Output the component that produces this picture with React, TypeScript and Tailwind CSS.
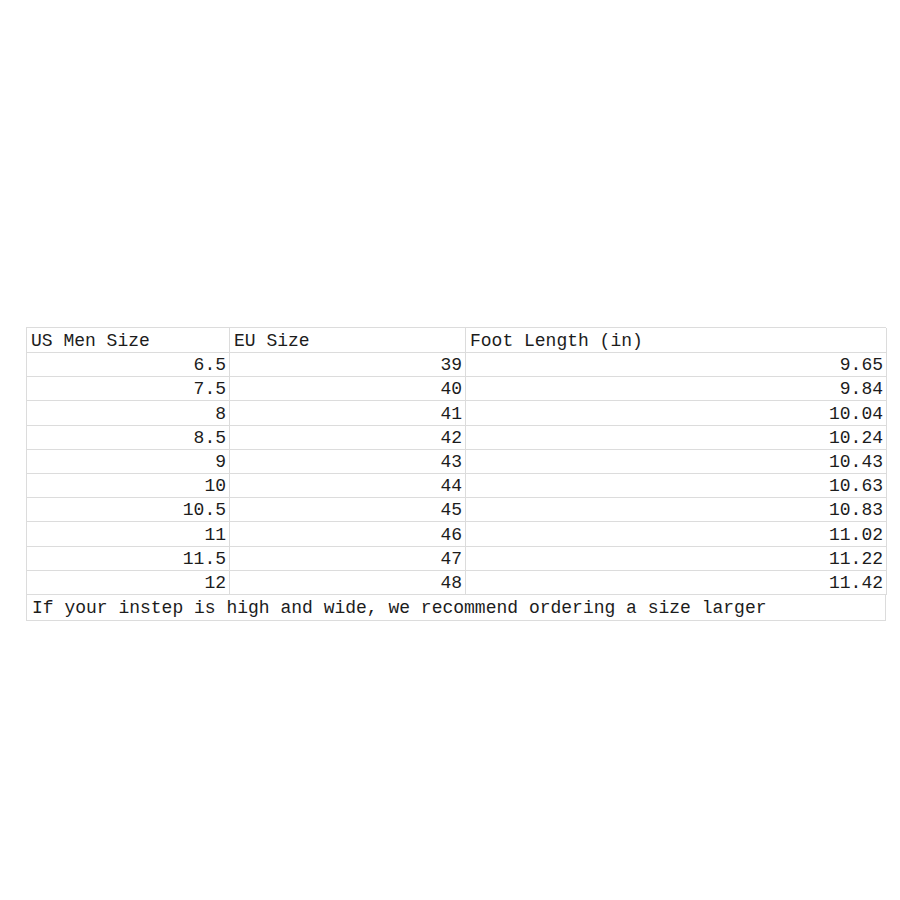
import React from "react";

const rows: [string, string, string][] = [
  ["6.5", "39", "9.65"],
  ["7.5", "40", "9.84"],
  ["8", "41", "10.04"],
  ["8.5", "42", "10.24"],
  ["9", "43", "10.43"],
  ["10", "44", "10.63"],
  ["10.5", "45", "10.83"],
  ["11", "46", "11.02"],
  ["11.5", "47", "11.22"],
  ["12", "48", "11.42"],
];

export default function App() {
  return (
    <div
      className="w-[900px] h-[900px] bg-white pt-[327px] pl-[26px] text-[#1c1c1c] text-[18px]"
      style={{ fontFamily: '"Liberation Mono", "Noto Sans CJK SC", monospace' }}
    >
      <div className="w-[860px] border-l border-t border-[#dcdcdc]">
        <div className="grid grid-cols-[203px_236px_421px] h-[25px]">
          <div className="border-r border-b border-[#dcdcdc] pl-[4px] flex items-end leading-[22px]">US Men Size</div>
          <div className="border-r border-b border-[#dcdcdc] pl-[4px] flex items-end leading-[22px]">EU Size</div>
          <div className="border-r border-b border-[#dcdcdc] pl-[4px] flex items-end leading-[22px]">Foot Length (in)</div>
        </div>
        {rows.map((r) => (
          <div key={r[0]} className="grid grid-cols-[203px_236px_421px] h-[24.2px]">
            <div className="border-r border-b border-[#dcdcdc] pr-[3px] flex items-end justify-end leading-[22px]">{r[0]}</div>
            <div className="border-r border-b border-[#dcdcdc] pr-[3px] flex items-end justify-end leading-[22px]">{r[1]}</div>
            <div className="border-r border-b border-[#dcdcdc] pr-[3px] flex items-end justify-end leading-[22px]">{r[2]}</div>
          </div>
        ))}
        <div className="h-[26px] border-r border-b border-[#dcdcdc] pl-[5px] flex items-end leading-[23px]">
          If your instep is high and wide, we recommend ordering a size larger
        </div>
      </div>
    </div>
  );
}
